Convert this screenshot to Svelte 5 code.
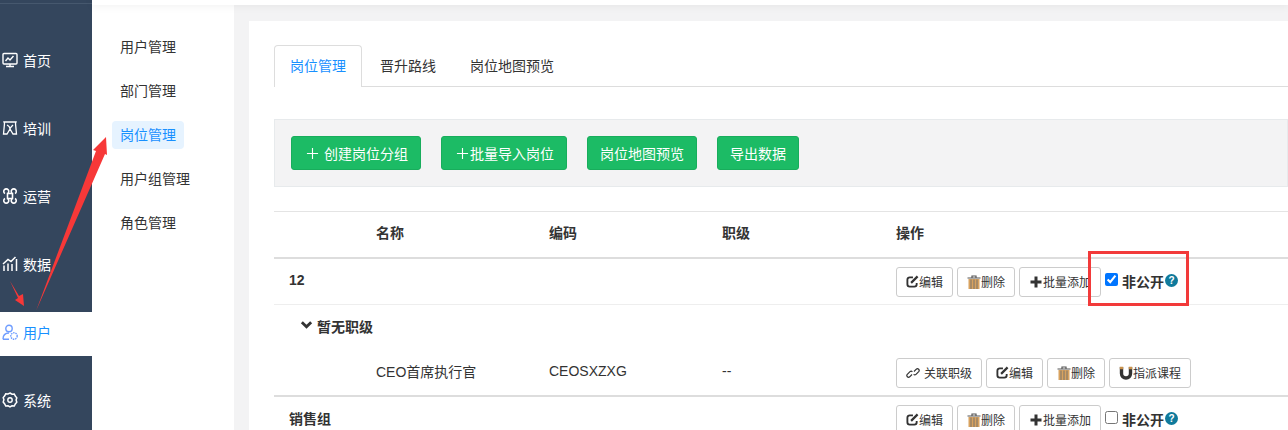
<script>
    const navItems = [
        { name: '首页', icon: 'monitor' },
        { name: '培训', icon: 'map' },
        { name: '运营', icon: 'command' },
        { name: '数据', icon: 'chart' },
        { name: '用户', icon: 'user', active: true },
        { name: '系统', icon: 'gear' }
    ]
    const subItems = [
        { name: '用户管理' },
        { name: '部门管理' },
        { name: '岗位管理', active: true },
        { name: '用户组管理' },
        { name: '角色管理' }
    ]
    const tabs = ['岗位管理', '晋升路线', '岗位地图预览']
    const groupActions = [
        { icon: 'edit', label: '编辑' },
        { icon: 'trash', label: '删除' },
        { icon: 'plus', label: '批量添加' }
    ]
    const jobActions = [
        { icon: 'link', label: '关联职级' },
        { icon: 'edit', label: '编辑' },
        { icon: 'trash', label: '删除' },
        { icon: 'magnet', label: '指派课程' }
    ]
</script>

{#snippet navIcon(kind)}
    <svg class="nav-icon" viewBox="0 0 16 16" fill="none" stroke="currentColor" stroke-width="1.400">
        {#if kind === 'monitor'}
            <rect x="1" y="1.500" width="14" height="10.500" rx="1" />
            <path d="M3.500 9l2.500-3 2 2 3.500-4M4 14.500h8M8 12v2" />
        {:else if kind === 'map'}
            <path d="M2 2h12l-.5 1.500L14.500 14H11L8 9l-3 5H1.500L2.500 3.500zM5 5c2 1 3 3 3 4M11 5c-1 1-3 3-3 4" stroke-width="1.300" />
        {:else if kind === 'command'}
            <path d="M5.500 5.500h5v5h-5zM5.500 5.500a2.500 2.500 0 1 0-2.500 0M10.500 5.500a2.500 2.500 0 1 1 2.500 0M5.500 10.500a2.500 2.500 0 1 1-2.500 0M10.500 10.500a2.500 2.500 0 1 0 2.500 0" stroke-width="1.600" />
        {:else if kind === 'chart'}
            <path d="M2 15V9.500M6 15V7.500M10 15V8M14.500 15V3M1 8l5-4.500 3 2L13.500 1" stroke-width="1.500" />
        {:else if kind === 'user'}
            <circle cx="7" cy="4.500" r="3.200" />
            <path d="M1 15.200c0-4 2-6.200 6-6.200M1 15.200h6" />
            <circle cx="12" cy="12" r="3.200" stroke-dasharray="1.500 .8" />
        {:else}
            <path d="M8 1l2 1.200 2.300-.2 1 2 1.500 1.800-.7 2.200.7 2.200-1.500 1.800-1 2-2.300-.2-2 1.200-2-1.200-2.300.2-1-2L1.200 10l.7-2.200-.7-2.200 1.500-1.800 1-2 2.300.2z" stroke-width="1.500" />
            <circle cx="8" cy="8" r="2.200" />
        {/if}
    </svg>
{/snippet}

{#snippet btnIcon(kind)}
    <svg class="btn-icon {kind}" viewBox="0 0 14 14">
        {#if kind === 'edit'}
            <path d="M11.500 8.500V10a2.500 2.500 0 0 1-2.500 2.500H4A2.500 2.500 0 0 1 1.500 10V5A2.500 2.500 0 0 1 4 2.500h3.500" fill="none" stroke="#333" stroke-width="2" />
            <path d="M5.500 8.500L12.500 1.500" fill="none" stroke="#333" stroke-width="2.400" />
        {:else if kind === 'trash'}
            <path d="M.5 3h13M5 2.500V1h4v1.500" fill="none" stroke="#555" stroke-width="1.200" />
            <rect x="1.500" y="4" width="11" height="10" fill="#d8a25f" />
            <path d="M4 4.500V14M7 4.500V14M10 4.500V14" stroke="#77736c" stroke-width="1" />
        {:else if kind === 'plus'}
            <path d="M7 1.500v11M1.500 7h11" fill="none" stroke="#333" stroke-width="3" />
        {:else if kind === 'link'}
            <path d="M6 8.500l-2.300 2.300a1.700 1.700 0 0 1-2.400-2.400L4 5.700a1.700 1.700 0 0 1 2.400 0M8 5.500l2.300-2.300a1.700 1.700 0 0 1 2.400 2.400L10 8.300a1.700 1.700 0 0 1-2.400 0" fill="none" stroke="#333" stroke-width="1.200" />
        {:else}
            <path d="M2.500 1v6.500a4.500 4.500 0 0 0 9 0V1" fill="none" stroke="#333" stroke-width="3.400" />
            <path d="M.8 2h3.400M9.800 2h3.400" stroke="#c8914b" stroke-width="2.400" />
        {/if}
    </svg>
{/snippet}

{#snippet actions(list)}
    <div class="actions">
        {#each list as action}
            <button class="btn">{@render btnIcon(action.icon)}{action.label}</button>
        {/each}
    </div>
{/snippet}

{#snippet privacy(checked)}
    <label class="privacy">
        <input type="checkbox" {checked} />
        <b>非公开</b>
        <span class="help">?</span>
    </label>
{/snippet}

<div class="page">
    <aside class="sidebar">
        {#each navItems as item}
            <div class="nav-item" class:active={item.active}>
                {@render navIcon(item.icon)}
                <span>{item.name}</span>
            </div>
        {/each}
    </aside>

    <nav class="subnav">
        {#each subItems as item}
            <div class="sub-row">
                <span class="sub-item" class:active={item.active}>{item.name}</span>
            </div>
        {/each}
    </nav>

    <div class="main">
        <div class="topbar"></div>
        <section class="card">
            <div class="tabs">
                {#each tabs as tab, i}
                    <div class="tab" class:active={i === 0}>{tab}</div>
                {/each}
            </div>

            <div class="toolbar">
                <button class="green first">
                    <svg class="plus" viewBox="0 0 14 14"><path d="M7 1v12M1 7h12" /></svg>
                    创建岗位分组
                </button>
                <button class="green second">
                    <svg class="plus" viewBox="0 0 14 14"><path d="M7 1v12M1 7h12" /></svg>
                    批量导入岗位
                </button>
                <button class="green">岗位地图预览</button>
                <button class="green">导出数据</button>
            </div>

            <div class="table">
                <div class="row head">
                    <div></div>
                    <div>名称</div>
                    <div>编码</div>
                    <div>职级</div>
                    <div>操作</div>
                </div>

                <div class="row group thin">
                    <div class="group-name">12</div>
                    <div></div>
                    <div></div>
                    <div></div>
                    <div class="ops">{@render actions(groupActions)}{@render privacy(true)}</div>
                </div>

                <div class="row level">
                    <svg class="chevron" viewBox="0 0 14 10"><path d="M2 2l5 5 5-5" /></svg>
                    <b>暂无职级</b>
                </div>

                <div class="row job thick">
                    <div></div>
                    <div>CEO首席执行官</div>
                    <div>CEOSXZXG</div>
                    <div>--</div>
                    <div class="ops">{@render actions(jobActions)}</div>
                </div>

                <div class="row group">
                    <div class="group-name">销售组</div>
                    <div></div>
                    <div></div>
                    <div></div>
                    <div class="ops">{@render actions(groupActions)}{@render privacy(false)}</div>
                </div>
            </div>
        </section>
    </div>

    <!-- annotations drawn on top of the screenshot -->
    <svg class="marks" width="1288" height="430" viewBox="0 0 1288 430">
        <polygon points="106,137 107,155 105,154 36,311 96,151 93,150" fill="#f73838" />
        <polygon points="10,281 19,296 23,294 24,306 15,300 18,298" fill="#f73838" />
        <rect x="1089.500" y="252.500" width="98" height="52" fill="none" stroke="#f23a3a" stroke-width="3" />
    </svg>
</div>

<style>
    :global(body) {
        margin: 0;
        overflow: hidden;
    }
    .page {
        position: relative;
        display: flex;
        width: 1288px;
        height: 430px;
        overflow: hidden;
        background-color: #f3f3f4;
        color: #333;
        font-family: "Liberation Sans", "Noto Sans CJK SC", sans-serif;
        font-size: 14px;
    }
    .sidebar {
        flex: 0 0 92px;
        box-sizing: border-box;
        padding-top: 40px;
        background: linear-gradient(#34465d 3px, #46586e 3px, #46586e 4px, #34465d 4px);
        color: #fff;
    }
    .nav-item {
        display: flex;
        align-items: center;
        gap: 5px;
        box-sizing: border-box;
        height: 44px;
        margin-bottom: 24px;
        padding: 0 0 4px 2px;
    }
    .nav-item.active {
        background-color: #fff;
        color: #1890ff;
    }
    .nav-icon {
        width: 16px;
        height: 16px;
    }
    .nav-item.active .nav-icon {
        color: #6f9dff;
    }
    .subnav {
        flex: 0 0 142px;
        box-sizing: border-box;
        padding-top: 25px;
        background-color: #fff;
    }
    .sub-row {
        display: flex;
        align-items: center;
        height: 44px;
        padding-left: 20px;
    }
    .sub-item {
        padding: 0 8px;
        line-height: 28px;
        border-radius: 4px;
    }
    .sub-item.active {
        background-color: #e6f3ff;
        color: #1890ff;
    }
    .main {
        flex: 1;
        min-width: 0;
        position: relative;
    }
    .topbar {
        position: absolute;
        top: -92px;
        left: -142px;
        right: 0;
        height: 97px;
        background-color: #fff;
        box-shadow: 0 2px 8px rgba(0, 0, 0, .05);
    }
    .card {
        box-sizing: border-box;
        height: 409px;
        margin: 21px 0 0 15px;
        padding: 24px 0 0 25px;
        background-color: #fff;
    }
    .tabs {
        display: flex;
        gap: 2px;
        height: 42px;
        border-bottom: 1px solid #ddd;
        box-sizing: border-box;
    }
    .tab {
        box-sizing: border-box;
        height: 42px;
        padding: 0 15px;
        line-height: 41px;
        border: 1px solid transparent;
        border-bottom: none;
        border-radius: 4px 4px 0 0;
    }
    .tab.active {
        border-color: #ddd;
        background-color: #fff;
        color: #1890ff;
    }
    .toolbar {
        display: flex;
        gap: 20px;
        box-sizing: border-box;
        height: 68px;
        margin-top: 32px;
        padding: 16px;
        background-color: #f3f3f4;
        border: 1px solid #e7eaec;
    }
    .green {
        display: flex;
        align-items: center;
        height: 34px;
        padding: 0 12px;
        color: #fff;
        font: inherit;
        background-color: #1cbb65;
        border: 1px solid #18ad5c;
        border-radius: 3px;
    }
    .plus {
        width: 13px;
        height: 13px;
        fill: none;
        stroke: #fff;
        stroke-width: 1.200;
    }
    .first {
        padding-left: 14px;
    }
    .first .plus {
        margin-right: 5px;
    }
    .second {
        padding-left: 14px;
    }
    .second .plus {
        margin-right: 1px;
    }
    .table {
        margin-top: 24px;
        border-top: 1px solid #e4e4e4;
    }
    .row {
        display: grid;
        grid-template-columns: 102px 173px 173px 174px 1fr;
        align-items: center;
        box-sizing: border-box;
    }
    .row > div:not(.ops) {
        margin-bottom: 3px;
    }
    .head {
        height: 47px;
        padding-bottom: 2px;
        font-weight: bold;
        border-bottom: 2px solid #ddd;
    }
    .head > div:last-child {
        margin-bottom: 3px;
    }
    .group {
        height: 45px;
        font-weight: bold;
    }
    .thin {
        height: 46px;
        border-bottom: 1px solid #eee;
    }
    .group-name {
        padding-left: 15px;
        white-space: nowrap;
    }
    .level {
        display: flex;
        align-items: center;
        gap: 4px;
        height: 45px;
        padding: 0 0 4px 26px;
    }
    .chevron {
        width: 13px;
        height: 10px;
        margin-bottom: 2px;
        fill: none;
        stroke: #333;
        stroke-width: 3;
    }
    .job {
        height: 47px;
        border-bottom: 2px solid #ddd;
        font-weight: normal;
    }
    .ops {
        display: flex;
        align-items: center;
        gap: 4px;
        font-weight: normal;
    }
    .actions {
        display: flex;
        gap: 4px;
    }
    .btn {
        display: flex;
        align-items: center;
        height: 30px;
        padding: 0 9px;
        color: #333;
        font-family: inherit;
        font-size: 12px;
        white-space: nowrap;
        background-color: #fff;
        border: 1px solid #ccc;
        border-radius: 3px;
    }
    .btn-icon {
        flex: none;
        width: 14px;
        height: 14px;
    }
    .btn-icon.edit {
        width: 13px;
        height: 13px;
    }
    .btn-icon.link {
        margin-right: 4px;
    }
    .privacy {
        display: flex;
        align-items: center;
        margin-top: -2px;
        white-space: nowrap;
    }
    .privacy input {
        width: 13px;
        height: 13px;
        margin: 0 4px 3px 0;
    }
    .privacy b {
        font-weight: bold;
    }
    .help {
        display: inline-block;
        width: 13px;
        height: 13px;
        margin-left: 1px;
        color: #fff;
        font-size: 10px;
        font-weight: bold;
        line-height: 13px;
        text-align: center;
        background-color: #0f7a9c;
        border-radius: 50%;
    }
    .marks {
        position: absolute;
        top: 0;
        left: 0;
        pointer-events: none;
    }
</style>
